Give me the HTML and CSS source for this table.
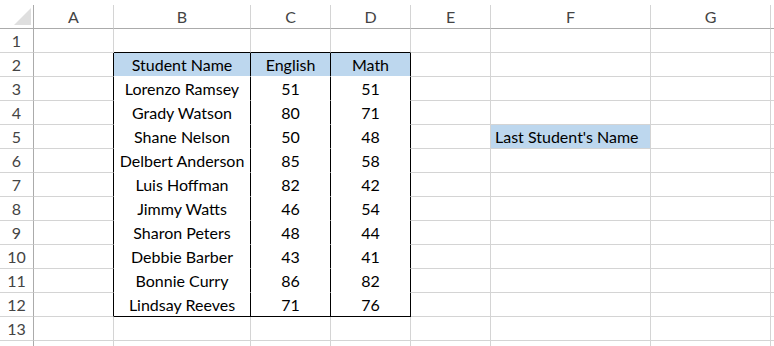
FILE: index.html
```html
<!DOCTYPE html>
<html>
<head>
<meta charset="utf-8">
<link rel="stylesheet" href="styles.css">
</head>
<body>
<div class="sheet">
  <div class="cell hd corner"><svg width="18" height="18" viewBox="0 0 18 18"><polygon points="17,0 17,17 0,17" fill="#dfdfdf"/></svg></div>
  <div class="cell hd">A</div><div class="cell hd">B</div><div class="cell hd">C</div><div class="cell hd">D</div><div class="cell hd">E</div><div class="cell hd">F</div><div class="cell hd">G</div><div class="cell hd edge"></div>

  <div class="cell rn">1</div><div class="cell"></div><div class="cell tt"></div><div class="cell tt"></div><div class="cell tt"></div><div class="cell"></div><div class="cell"></div><div class="cell"></div><div class="cell edge"></div>

  <div class="cell rn">2</div><div class="cell ta"></div><div class="cell t th">Student Name</div><div class="cell t th">English</div><div class="cell t th">Math</div><div class="cell"></div><div class="cell"></div><div class="cell"></div><div class="cell edge"></div>

  <div class="cell rn">3</div><div class="cell ta"></div><div class="cell t">Lorenzo Ramsey</div><div class="cell t">51</div><div class="cell t">51</div><div class="cell"></div><div class="cell"></div><div class="cell"></div><div class="cell edge"></div>

  <div class="cell rn">4</div><div class="cell ta"></div><div class="cell t">Grady Watson</div><div class="cell t">80</div><div class="cell t">71</div><div class="cell"></div><div class="cell"></div><div class="cell"></div><div class="cell edge"></div>

  <div class="cell rn">5</div><div class="cell ta"></div><div class="cell t">Shane Nelson</div><div class="cell t">50</div><div class="cell t">48</div><div class="cell"></div><div class="cell lbl">Last Student's Name</div><div class="cell"></div><div class="cell edge"></div>

  <div class="cell rn">6</div><div class="cell ta"></div><div class="cell t">Delbert Anderson</div><div class="cell t">85</div><div class="cell t">58</div><div class="cell"></div><div class="cell"></div><div class="cell"></div><div class="cell edge"></div>

  <div class="cell rn">7</div><div class="cell ta"></div><div class="cell t">Luis Hoffman</div><div class="cell t">82</div><div class="cell t">42</div><div class="cell"></div><div class="cell"></div><div class="cell"></div><div class="cell edge"></div>

  <div class="cell rn">8</div><div class="cell ta"></div><div class="cell t">Jimmy Watts</div><div class="cell t">46</div><div class="cell t">54</div><div class="cell"></div><div class="cell"></div><div class="cell"></div><div class="cell edge"></div>

  <div class="cell rn">9</div><div class="cell ta"></div><div class="cell t">Sharon Peters</div><div class="cell t">48</div><div class="cell t">44</div><div class="cell"></div><div class="cell"></div><div class="cell"></div><div class="cell edge"></div>

  <div class="cell rn">10</div><div class="cell ta"></div><div class="cell t">Debbie Barber</div><div class="cell t">43</div><div class="cell t">41</div><div class="cell"></div><div class="cell"></div><div class="cell"></div><div class="cell edge"></div>

  <div class="cell rn">11</div><div class="cell ta"></div><div class="cell t">Bonnie Curry</div><div class="cell t">86</div><div class="cell t">82</div><div class="cell"></div><div class="cell"></div><div class="cell"></div><div class="cell edge"></div>

  <div class="cell rn">12</div><div class="cell ta"></div><div class="cell t tb">Lindsay Reeves</div><div class="cell t tb">71</div><div class="cell t tb">76</div><div class="cell"></div><div class="cell"></div><div class="cell"></div><div class="cell edge"></div>

  <div class="cell rn">13</div><div class="cell"></div><div class="cell"></div><div class="cell"></div><div class="cell"></div><div class="cell"></div><div class="cell"></div><div class="cell"></div><div class="cell edge"></div>

  <div class="cell rn"></div><div class="cell"></div><div class="cell"></div><div class="cell"></div><div class="cell"></div><div class="cell"></div><div class="cell"></div><div class="cell"></div><div class="cell edge"></div>
</div>
</body>
</html>
```

FILE: styles.css
```css
html, body {
  margin: 0;
  padding: 0;
  background: #ffffff;
  overflow: hidden;
}

body {
  width: 774px;
  height: 346px;
  padding-top: 5px;
  box-sizing: border-box;
  font-family: Lato, "Liberation Sans", sans-serif;
  font-size: 16px;
  color: #000000;
}

.sheet {
  display: grid;
  grid-template-columns: 34px 80px 137px 80px 80px 80px 160px 120px 3px;
  grid-auto-rows: 24px;
  height: 341px;
  overflow: hidden;
}

.cell {
  box-sizing: border-box;
  border-right: 1px solid #d4d4d4;
  border-bottom: 1px solid #d4d4d4;
  display: flex;
  align-items: center;
  justify-content: center;
  white-space: nowrap;
  overflow: hidden;
  background-clip: padding-box;
}

.hd {
  border-bottom-color: #ababab;
  color: #444444;
}

.corner {
  border-right-color: #ababab;
  justify-content: flex-end;
  align-items: flex-end;
  padding: 0 1px 2px 0;
}

.corner svg {
  display: block;
}

.rn {
  border-right-color: #ababab;
  color: #444444;
}

.edge {
  border-right: none;
}

.ta {
  border-right-color: #000000;
}

.tt {
  border-bottom-color: #000000;
}

.t {
  border-right-color: #000000;
  border-bottom-color: #ffffff;
}

.th {
  background-color: #bdd7ee;
}

.tb {
  border-bottom-color: #000000;
}

.lbl {
  background-color: #bdd7ee;
  justify-content: flex-start;
  padding-left: 4px;
}
```
